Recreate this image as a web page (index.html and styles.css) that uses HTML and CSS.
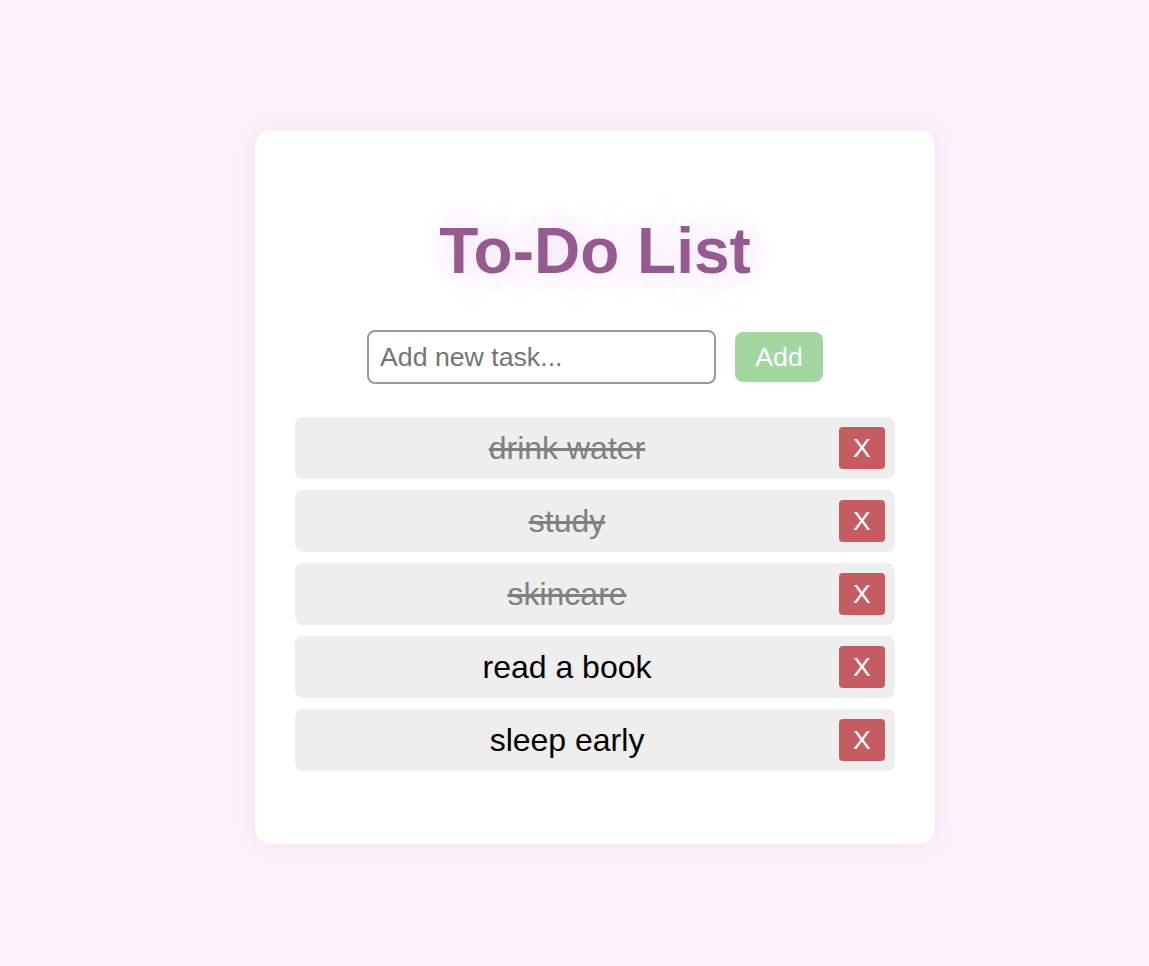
FILE: index.html
```html
<!DOCTYPE html>
<html lang="en">
<head>
<meta charset="utf-8">
<title>To-Do List</title>
<link rel="stylesheet" href="styles.css">
</head>
<body>
<div class="card">
  <h1 class="title">To-Do List</h1>
  <div class="add-row">
    <input class="task-input" type="text" placeholder="Add new task...">
    <button class="add-btn">Add</button>
  </div>
  <ul class="list">
    <li class="item done"><span class="item-text">drink water</span><button class="del-btn">X</button></li>
    <li class="item done"><span class="item-text">study</span><button class="del-btn">X</button></li>
    <li class="item done"><span class="item-text">skincare</span><button class="del-btn">X</button></li>
    <li class="item"><span class="item-text">read a book</span><button class="del-btn">X</button></li>
    <li class="item"><span class="item-text">sleep early</span><button class="del-btn">X</button></li>
  </ul>
</div>
</body>
</html>
```
FILE: styles.css
```css
html, body {
  margin: 0;
  padding: 0;
}
body {
  background: #fcf2fb;
  font-family: "Liberation Sans", Arial, sans-serif;
  min-height: 966px;
}
.card {
  box-sizing: border-box;
  width: 680px;
  margin: 130px 0 0 255px;
  padding: 40px 40px 73px;
  background: #ffffff;
  border-radius: 16px;
  box-shadow: 0 0 18px rgba(245, 200, 235, 0.45);
  display: flex;
  flex-direction: column;
  align-items: center;
}
.title {
  margin: 44px 0 42px;
  font-size: 64px;
  line-height: normal;
  font-weight: 700;
  color: #955a8f;
  text-shadow: 0 0 32px rgba(225, 175, 240, 0.55);
}
.add-row {
  display: flex;
  align-items: center;
  gap: 19px;
}
.task-input {
  box-sizing: border-box;
  width: 349px;
  height: 54px;
  padding: 0 11px;
  border: 2px solid #999999;
  border-radius: 8px;
  font-family: "Liberation Sans", Arial, sans-serif;
  font-size: 26.7px;
  color: #333;
  outline: none;
}
.task-input::placeholder {
  color: #757575;
}
.add-btn {
  box-sizing: border-box;
  width: 88px;
  height: 50px;
  border: none;
  border-radius: 8px;
  background: #a2d7a2;
  color: #ffffff;
  font-family: "Liberation Sans", Arial, sans-serif;
  font-size: 26.7px;
  padding: 0;
}
.list {
  list-style: none;
  margin: 33px 0 0;
  padding: 0;
  width: 600px;
  display: flex;
  flex-direction: column;
  gap: 11px;
}
.item {
  box-sizing: border-box;
  height: 62px;
  padding: 10px;
  gap: 10px;
  background: #eeeeee;
  border-radius: 8px;
  display: flex;
  align-items: center;
}
.item-text {
  flex: 1;
  text-align: center;
  font-size: 32px;
  color: #000000;
}
.item.done .item-text {
  color: #808080;
  text-decoration: line-through;
}
.del-btn {
  box-sizing: border-box;
  width: 46px;
  height: 42px;
  border: none;
  border-radius: 4px;
  background: #c55c62;
  color: #ffffff;
  font-family: "Liberation Sans", Arial, sans-serif;
  font-size: 26.7px;
  padding: 0;
}
```
